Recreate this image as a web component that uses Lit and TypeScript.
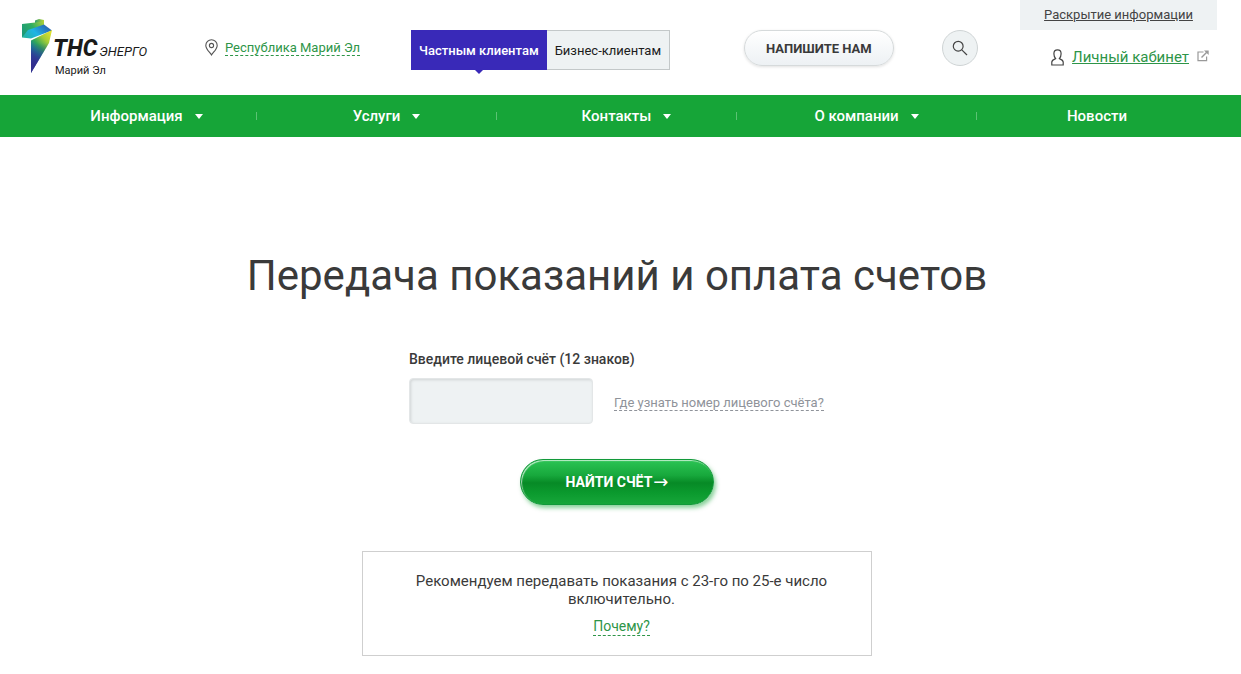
import { LitElement, html, css, svg, nothing } from "lit";
import { customElement, state } from "lit/decorators.js";

interface NavItem {
  label: string;
  menu: boolean;
}

const NAV: NavItem[] = [
  { label: "Информация", menu: true },
  { label: "Услуги", menu: true },
  { label: "Контакты", menu: true },
  { label: "О компании", menu: true },
  { label: "Новости", menu: false },
];

const logoMark = svg`
  <defs>
    <linearGradient id="cap" x1="0" y1="0" x2="1" y2="0">
      <stop offset="0" stop-color="#2f9e70" />
      <stop offset="1" stop-color="#b9d432" />
    </linearGradient>
    <linearGradient id="left" x1="0" y1="0.6" x2="1" y2="0.1">
      <stop offset="0" stop-color="#1d9a78" />
      <stop offset="0.5" stop-color="#2fae62" />
      <stop offset="1" stop-color="#a9cf3a" />
    </linearGradient>
    <linearGradient id="band" x1="0" y1="0.8" x2="1" y2="0.3">
      <stop offset="0" stop-color="#25b4a0" />
      <stop offset="0.45" stop-color="#1fb4e4" />
      <stop offset="0.75" stop-color="#2483c9" />
      <stop offset="1" stop-color="#2c62ae" />
    </linearGradient>
    <linearGradient id="stem" gradientUnits="userSpaceOnUse" x1="29" y1="14" x2="8" y2="34">
      <stop offset="0" stop-color="#dfe02e" />
      <stop offset="0.3" stop-color="#a5cd38" />
      <stop offset="0.6" stop-color="#2fa65a" />
      <stop offset="0.8" stop-color="#1a7f94" />
      <stop offset="1" stop-color="#2a4fa0" />
    </linearGradient>
    <linearGradient id="tip" x1="0" y1="0" x2="0" y2="1">
      <stop offset="0.3" stop-color="#33298c" stop-opacity="0" />
      <stop offset="0.8" stop-color="#33298c" stop-opacity="0.85" />
    </linearGradient>
  </defs>
  <path d="M13 1.5 L17 0 L22 1 V7 L13 5Z" fill="url(#cap)" />
  <path d="M0 5 L13 3.5 L22 2.5 V6 L7 13 L0 18.5Z" fill="url(#left)" />
  <path d="M0 18.5 L6 11 L22 5.5 L30 11.5 L9 19.5Z" fill="url(#band)" />
  <path d="M30 11 L27 24 L9 54 V21.5 L20 16Z" fill="url(#stem)" />
  <path d="M30 11 L27 24 L9 54 V21.5 L20 16Z" fill="url(#tip)" />
`;

@customElement("app-root")
export class AppRoot extends LitElement {
  @state() private account = "";

  static styles = css`
    :host {
      display: block;
      min-height: 100vh;
      background: #fff;
      color: #3a3a3a;
      font-family: Roboto, "Liberation Sans", sans-serif;
      font-size: 14px;
      line-height: 18px;
    }
    a {
      color: #2e9548;
      text-decoration: none;
    }
    button {
      font-family: inherit;
      cursor: pointer;
    }
    svg {
      display: block;
      flex: none;
    }
    .wrap {
      padding: 0 24px 0 17px;
    }
    .header {
      display: grid;
      grid-template-columns: 188fr 206fr 333fr 198fr 78fr 197fr;
      min-height: 95px;
    }
    .logo {
      display: flex;
      padding: 19px 0 0 5px;
      color: #1a1a1a;
    }
    .logo-text {
      padding-top: 18px;
      white-space: nowrap;
    }
    .logo-name {
      display: flex;
      align-items: baseline;
      gap: 2px;
      font-style: italic;
      line-height: 24px;
    }
    .logo-name b {
      font-size: 23px;
      font-weight: 800;
    }
    .logo-name span {
      font-size: 13px;
    }
    .logo-region {
      padding-left: 2px;
      font-size: 11px;
      line-height: 14px;
    }
    .region {
      display: flex;
      align-items: flex-start;
      gap: 7px;
      padding-top: 39px;
      font-size: 13px;
      white-space: nowrap;
    }
    .dashed {
      padding-top: 2px;
      border-bottom: 1px dashed currentColor;
      line-height: 14px;
    }
    .tabs {
      display: flex;
      align-items: flex-start;
      padding-top: 30px;
    }
    .tab {
      position: relative;
      box-sizing: border-box;
      height: 40px;
      padding: 0 8px;
      border: 1px solid #c3c8c9;
      border-left: 0;
      background: #eef2f3;
      color: #1c1c1c;
      font-size: 13px;
      white-space: nowrap;
    }
    .tab.active {
      padding: 0 7px;
      border: 1px solid #3929b8;
      background: #3929b8;
      color: #fff;
      font-weight: 500;
    }
    .tab.active::after {
      content: "";
      position: absolute;
      top: 100%;
      left: 50%;
      margin-left: -5px;
      border: 5px solid transparent;
      border-top-color: #3929b8;
      border-bottom: 0;
    }
    .cell {
      padding-top: 30px;
    }
    .write {
      height: 36px;
      padding: 0 21px;
      border: 1px solid #d6dadb;
      border-radius: 18px;
      background: linear-gradient(#fff, #edf1f4);
      box-shadow: 0 1px 3px rgba(0, 0, 0, 0.12);
      color: #3a3a3a;
      font-size: 13px;
      font-weight: 700;
      white-space: nowrap;
    }
    .search {
      display: grid;
      place-items: center;
      width: 36px;
      height: 36px;
      padding: 0;
      border: 1px solid #cfd4d5;
      border-radius: 50%;
      background: #eef2f3;
    }
    .account {
      display: flex;
      flex-direction: column;
      gap: 17px;
    }
    .disclosure {
      background: #eef2f3;
      color: #444;
      font-size: 13px;
      line-height: 30px;
      text-align: center;
      text-decoration: underline;
      white-space: nowrap;
    }
    .cabinet {
      display: flex;
      align-items: center;
      justify-content: flex-end;
      gap: 8px;
      padding-right: 8px;
      font-size: 15px;
      line-height: 20px;
      white-space: nowrap;
    }
    .cabinet span {
      text-decoration: underline;
    }
    .nav {
      background: #16a538;
    }
    .nav-list {
      display: grid;
      grid-template-columns: repeat(5, 1fr);
      margin: 0;
      list-style: none;
    }
    .nav-item {
      display: flex;
      align-items: center;
      height: 42px;
    }
    .nav-item:not(:last-child)::after {
      content: "";
      width: 1px;
      height: 8px;
      background: #5cc274;
    }
    .nav-link {
      display: flex;
      flex: 1;
      align-items: center;
      justify-content: center;
      gap: 12px;
      padding-left: 20px;
      color: #fff;
      font-size: 15px;
      font-weight: 500;
      white-space: nowrap;
    }
    .nav-item:last-child .nav-link {
      padding-left: 0;
    }
    .caret {
      border: 4px solid transparent;
      border-top: 5px solid #fff;
      border-bottom: 0;
    }
    .main {
      display: flex;
      flex-direction: column;
      align-items: center;
      padding-top: 113px;
      padding-bottom: 18px;
    }
    .title {
      margin: 0;
      font-size: 42px;
      font-weight: 400;
      line-height: 52px;
      text-align: center;
    }
    .form {
      display: flex;
      flex-direction: column;
      width: 416px;
      max-width: 100%;
      padding-top: 48px;
    }
    .label {
      font-weight: 500;
    }
    .field {
      display: flex;
      align-items: center;
      gap: 21px;
      padding-top: 10px;
    }
    .input {
      box-sizing: border-box;
      width: 184px;
      height: 46px;
      padding: 0 12px;
      border: 1px solid #e3e6e7;
      border-radius: 4px;
      background: #eef2f3;
      box-shadow: inset 1px 1px 3px rgba(0, 0, 0, 0.12);
      font: inherit;
      font-size: 16px;
    }
    .hint {
      margin-top: 3px;
      color: #8f939a;
      font-size: 13px;
      white-space: nowrap;
    }
    .submit {
      display: flex;
      align-self: center;
      align-items: center;
      justify-content: center;
      gap: 1px;
      width: 194px;
      height: 46px;
      margin-top: 35px;
      border: 1px solid #12993a;
      border-radius: 23px;
      background: linear-gradient(#2cc454 0%, #17a83c 35%, #078a26 52%, #0b9a2e 75%, #17a63a 100%);
      box-shadow: inset 1px 1px 1px rgba(255, 255, 255, 0.7), 2px 3px 4px rgba(22, 165, 56, 0.5);
      color: #fff;
      font-size: 14px;
      font-weight: 700;
    }
    .arrow {
      font-family: "DejaVu Sans", sans-serif;
      font-size: 18px;
      font-weight: 400;
      line-height: 18px;
    }
    .note {
      box-sizing: border-box;
      width: 510px;
      max-width: 100%;
      margin-top: 46px;
      padding: 20px 40px 19px 49px;
      border: 1px solid #cfcfcf;
      font-size: 15px;
      text-align: center;
    }
    .note p {
      margin: 0 0 9px;
    }
    .why {
      display: inline-block;
      padding-top: 0;
      font-size: 14px;
      line-height: 18px;
    }
  `;

  private onInput(e: Event) {
    this.account = (e.target as HTMLInputElement).value;
  }

  render() {
    return html`
      <header class="wrap header">
        <a class="logo" href="#" aria-label="ТНС энерго Марий Эл">
          <svg width="31" height="55" viewBox="0 0 31 55">${logoMark}</svg>
          <div class="logo-text">
            <div class="logo-name"><b>ТНС</b><span>ЭНЕРГО</span></div>
            <div class="logo-region">Марий Эл</div>
          </div>
        </a>
        <div class="region">
          <svg width="13" height="17" viewBox="0 0 13 17" fill="none" stroke="#555" stroke-width="1.1">
            <path d="M6.5 16 C5 13.5 .8 10 .8 6.4 a5.7 5.7 0 0 1 11.4 0 C12.2 10 8 13.5 6.5 16Z" />
            <circle cx="6.5" cy="6.5" r="2.1" />
          </svg>
          <a class="dashed" href="#">Республика Марий Эл</a>
        </div>
        <div class="tabs">
          <button class="tab active">Частным клиентам</button>
          <button class="tab">Бизнес-клиентам</button>
        </div>
        <div class="cell"><button class="write">НАПИШИТЕ НАМ</button></div>
        <div class="cell">
          <button class="search" aria-label="Поиск">
            <svg width="16" height="16" viewBox="0 0 16 16" fill="none" stroke="#444" stroke-width="1.2">
              <circle cx="6.2" cy="6.2" r="4.9" />
              <path d="M9.8 9.8 L15 15" />
            </svg>
          </button>
        </div>
        <div class="account">
          <a class="disclosure" href="#">Раскрытие информации</a>
          <a class="cabinet" href="#">
            <svg width="13" height="17" viewBox="0 0 13 17" fill="none" stroke="#444" stroke-width="1.2">
              <path d="M4.6 9.6 C3.3 8 2.9 6.5 2.9 4.7 C2.9 2.2 4.4 .9 6.5 .9 S10.1 2.2 10.1 4.7 C10.1 6.5 9.7 8 8.4 9.6 C10.8 10.6 12.2 11.2 12.2 13 V16 H.8 V13 C.8 11.2 2.2 10.6 4.6 9.6Z" />
            </svg>
            <span>Личный кабинет</span>
            <svg width="12" height="15" viewBox="0 0 12 15" fill="none" stroke="#999" stroke-width="1.2">
              <path d="M6.5 2 H1 V10.6 H9.6 V6.5" />
              <path d="M4.5 7.5 L10 2" stroke-width="1.5" />
              <path d="M7 .4 H11.7 V5Z" fill="#999" stroke="none" />
            </svg>
          </a>
        </div>
      </header>
      <nav class="nav">
        <ul class="wrap nav-list">
          ${NAV.map(
            (item) => html`<li class="nav-item">
              <a class="nav-link" href="#">${item.label}${item.menu ? html`<i class="caret"></i>` : nothing}</a>
            </li>`
          )}
        </ul>
      </nav>
      <main class="wrap main">
        <h1 class="title">Передача показаний и оплата счетов</h1>
        <form class="form" @submit=${(e: Event) => e.preventDefault()}>
          <label class="label" for="account">Введите лицевой счёт (12 знаков)</label>
          <div class="field">
            <input class="input" id="account" inputmode="numeric" maxlength="12" .value=${this.account} @input=${this.onInput} />
            <a class="hint dashed" href="#">Где узнать номер лицевого счёта?</a>
          </div>
          <button class="submit" type="submit">НАЙТИ СЧЁТ<span class="arrow">→</span></button>
        </form>
        <section class="note">
          <p>Рекомендуем передавать показания с 23-го по 25-е число включительно.</p>
          <a class="why dashed" href="#">Почему?</a>
        </section>
      </main>
    `;
  }
}
